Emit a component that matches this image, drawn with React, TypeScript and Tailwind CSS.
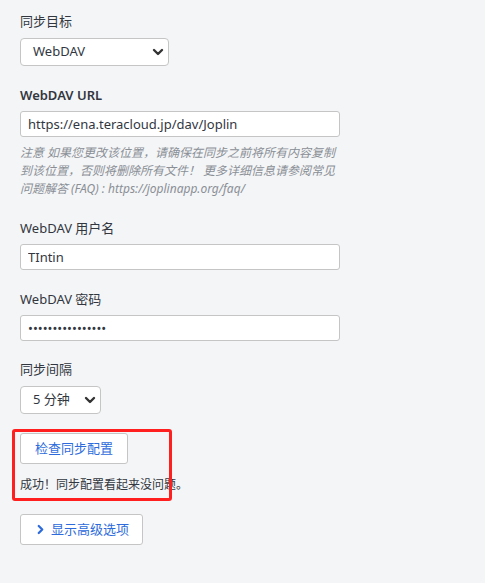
const font = "font-['Noto_Sans','Noto_Sans_CJK_SC',sans-serif]";

function ChevronDown({ className }: { className?: string }) {
  return (
    <svg viewBox="0 0 12 8" className={className} fill="none" stroke="currentColor" strokeWidth={2.4} strokeLinecap="round" strokeLinejoin="round">
      <polyline points="2,2 6,6 10,2" />
    </svg>
  );
}

function Select({ value, width }: { value: string; width: string }) {
  return (
    <div className={`relative mt-2 h-[28px] ${width}`}>
      <select
        defaultValue={value}
        className={`h-full w-full appearance-none rounded-[4px] border border-[#c5c5c5] bg-white pl-3 text-[13px] text-[#32373f] ${font}`}
      >
        <option>{value}</option>
      </select>
      <ChevronDown className="pointer-events-none absolute right-[5px] top-[10px] h-[8px] w-[12px] text-[#333]" />
    </div>
  );
}

function Field({ label, bold, value, type = "text", className = "" }: { label: string; bold?: boolean; value: string; type?: string; className?: string }) {
  return (
    <div className={className}>
      <div className={`h-[17px] leading-[17px] ${bold ? "font-semibold" : ""}`}>{label}</div>
      <input
        type={type}
        defaultValue={value}
        className={`mt-[7px] block h-[26px] w-[320px] rounded-[3px] border border-[#c5c5c5] bg-white px-[7px] text-[13px] text-[#32373f] ${font}`}
      />
    </div>
  );
}

export default function App() {
  return (
    <div className={`min-h-[583px] bg-[#f4f5f6] pl-5 pt-[13px] text-[13px] text-[#32373f] ${font}`}>
      <div className="h-[17px] leading-[17px]">同步目标</div>
      <Select value="WebDAV" width="w-[149px]" />

      <Field className="mt-[21px]" label="WebDAV URL" bold value="https://ena.teracloud.jp/dav/Joplin" />
      <div className="mt-[7px] text-[12px] italic leading-[18px] text-[#8a8f96] whitespace-nowrap">
        <div>注意 如果您更改该位置，请确保在同步之前将所有内容复制</div>
        <div>到该位置，否则将删除所有文件！ 更多详细信息请参阅常见</div>
        <div>问题解答 (FAQ) : https://joplinapp.org/faq/</div>
      </div>

      <Field className="mt-[22px]" label="WebDAV 用户名" value="TIntin" />
      <Field className="mt-[21px]" label="WebDAV 密码" type="password" value="abcdefghijklmnop" />

      <div className="mt-5 h-[17px] leading-[17px]">同步间隔</div>
      <Select value="5 分钟" width="w-[81px]" />

      <div className="relative mt-[19px] w-fit">
        <button className="flex h-[31px] items-center rounded-[3px] border border-[#c5c5c5] bg-white px-[14px] text-[13px] text-[#2d6bdc]">
          检查同步配置
        </button>
        <div className="mt-3 text-[12px] leading-[18px]">成功！同步配置看起来没问题。</div>
        <div className="pointer-events-none absolute -left-2 -top-1 h-[72px] w-[160px] rounded-[3px] border-[3px] border-[#ff1f1f]" />
      </div>

      <button className="mt-5 flex h-[31px] items-center gap-[7px] rounded-[3px] border border-[#c5c5c5] bg-white pl-[16px] pr-[13px] text-[13px] text-[#2d6bdc]">
        <svg viewBox="0 0 8 12" className="h-[11px] w-[7px]" fill="none" stroke="currentColor" strokeWidth={2.6} strokeLinecap="round" strokeLinejoin="round">
          <polyline points="2,2 6,6 2,10" />
        </svg>
        显示高级选项
      </button>
    </div>
  );
}
